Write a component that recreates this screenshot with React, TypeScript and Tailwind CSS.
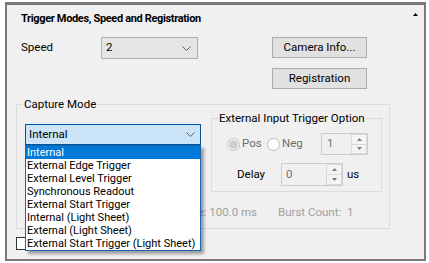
import React from "react";

const Chevron = () => (
  <svg width="9" height="5" viewBox="0 0 9 5" className="block">
    <polyline points="0.5,0.5 4.5,4.5 8.5,0.5" fill="none" stroke="#606060" strokeWidth="1" />
  </svg>
);

const Tri = ({ up }: { up: boolean }) => (
  <svg width="5" height="3" viewBox="0 0 5 3" className="block">
    {up ? <polygon points="0,3 2.5,0 5,3" fill="#7a7a7a" /> : <polygon points="0,0 2.5,3 5,0" fill="#7a7a7a" />}
  </svg>
);

const SpinButtons = () => (
  <div className="flex flex-col w-[16px] h-full">
    <div className="flex-1 flex items-center justify-center border border-[#dadada] bg-[#f4f4f4]">
      <Tri up={true} />
    </div>
    <div className="flex-1 flex items-center justify-center border border-t-0 border-[#dadada] bg-[#f4f4f4]">
      <Tri up={false} />
    </div>
  </div>
);

const items = [
  "Internal",
  "External Edge Trigger",
  "External Level Trigger",
  "Synchronous Readout",
  "External Start Trigger",
  "Internal (Light Sheet)",
  "External (Light Sheet)",
  "External Start Trigger (Light Sheet)",
];

export default function App() {
  return (
    <div className="w-[429px] h-[263px] bg-white pt-[2px] pl-[5px] font-['Roboto',sans-serif] text-[11.5px] text-black">
      <div className="w-[421px] h-[259px] border-2 border-t-[3px] border-[#7a7a7a] bg-[#f0f0f0]">
        {/* title */}
        <div className="flex items-start mt-[6px] ml-[14px] mr-[6px] h-[16px]">
          <div className="font-bold text-[11px] tracking-[-0.35px] leading-[16px]">Trigger Modes, Speed and Registration</div>
          <div className="ml-auto mt-[2px]">
            <svg width="5" height="3" viewBox="0 0 5 3" className="block">
              <polygon points="0,3 2.5,0 5,3" fill="#000" />
            </svg>
          </div>
        </div>

        {/* speed row */}
        <div className="flex items-start ml-[14px] mt-[10px]">
          <div className="w-[80px] h-[22px] flex items-center">Speed</div>
          <div className="w-[97px] h-[22px] border border-[#adadad] bg-[#e5e5e5] flex items-center pl-[4px] pr-[6px]">
            <span className="flex-1">2</span>
            <Chevron />
          </div>
          <div className="ml-[74px] flex flex-col">
            <div className="w-[95px] h-[21px] border border-[#adadad] bg-[#e1e1e1] flex items-center justify-center">
              Camera Info...
            </div>
            <div className="mt-[10px] w-[95px] h-[21px] border border-[#adadad] bg-[#e1e1e1] flex items-center justify-center">
              Registration
            </div>
          </div>
        </div>

        {/* capture mode group */}
        <div className="ml-[9px] mt-[15px] w-[374px] h-[125px] border border-[#dcdcdc]">
          <div className="-mt-[9px] ml-[6px] px-[1px] w-fit bg-[#f0f0f0] leading-[16px]">Capture Mode</div>
          <div className="flex items-start">
            <div className="relative ml-[8px] mt-[12px] w-[176px] z-10">
              <div className="h-[21px] border border-[#005499] bg-[#cce4f7] flex items-center pl-[3px] pr-[5px]">
                <span className="flex-1">Internal</span>
                <Chevron />
              </div>
              <div className="absolute top-full left-0 w-[176px] bg-white border border-[#1a64b4] shadow-[3px_3px_3px_rgba(0,0,0,0.35)] text-[11px]">
                {items.map((t, i) => (
                  <div
                    key={t}
                    className={
                      i === 0
                        ? "h-[13px] leading-[13px] pl-[1px] bg-[#0078d7] text-white whitespace-nowrap"
                        : "h-[13px] leading-[13px] pl-[1px] whitespace-nowrap"
                    }
                  >
                    {t}
                  </div>
                ))}
              </div>
            </div>

            <div className="ml-[10px] mt-[6px] w-[171px] h-[74px] border border-[#dcdcdc]">
              <div className="-mt-[9px] ml-[6px] px-[1px] w-fit bg-[#f0f0f0] leading-[16px]">
                External Input Trigger Option
              </div>
              <div className="flex items-center mt-[7px] h-[22px]">
                <div className="ml-[15px] w-[40px] flex items-center gap-[2px] text-[#6d6d6d]">
                  <div className="w-[13px] h-[13px] rounded-full border border-[#bcbcbc] bg-white flex items-center justify-center">
                    <div className="w-[9px] h-[9px] rounded-full bg-[#cfcfcf]" />
                  </div>
                  <span>Pos</span>
                </div>
                <div className="w-[54px] flex items-center gap-[2px] text-[#6d6d6d]">
                  <div className="w-[13px] h-[13px] rounded-full border border-[#bcbcbc] bg-white" />
                  <span>Neg</span>
                </div>
                <div className="w-[47px] h-[22px] border border-[#cccccc] bg-[#f0f0f0] flex items-stretch">
                  <div className="flex-1 flex items-center pl-[5px] text-[#6d6d6d]">1</div>
                  <SpinButtons />
                </div>
              </div>
              <div className="flex items-center mt-[8px] h-[23px]">
                <div className="ml-[25px] w-[44px]">Delay</div>
                <div className="w-[62px] h-[23px] border border-[#cccccc] bg-[#f0f0f0] flex items-stretch">
                  <div className="flex-1 flex items-center pl-[4px] text-[#6d6d6d]">0</div>
                  <SpinButtons />
                </div>
                <div className="ml-[4px]">us</div>
              </div>
            </div>
          </div>
          <div className="flex mt-[12px] h-[16px] leading-[16px] text-[#a0a0a0]">
            <div className="w-[240px] text-right">Exposure Time: 100.0 ms</div>
            <div className="ml-[21px]">Burst Count:&nbsp; 1</div>
          </div>
        </div>

        {/* checkbox */}
        <div className="ml-[9px] mt-[8px] flex items-center">
          <div className="w-[13px] h-[13px] border border-[#333333] bg-white" />
        </div>
      </div>
    </div>
  );
}
